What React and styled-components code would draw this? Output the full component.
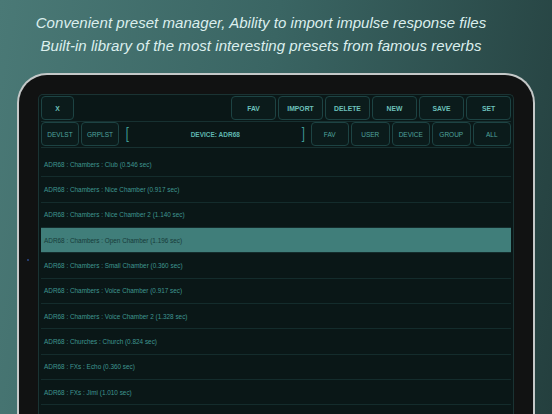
import styled, { createGlobalStyle } from "styled-components";

const GlobalStyle = createGlobalStyle`
    html, body {
        margin: 0;
        padding: 0;
    }
    body {
        width: 552px;
        height: 414px;
        overflow: hidden;
        font-family: "Liberation Sans", Arial, sans-serif;
    }
`;

const Page = styled.div`
    width: 552px;
    height: 414px;
    overflow: hidden;
    background: linear-gradient(100deg, #4a7976 0%, #3a6563 45%, #243f3e 100%);
    display: flex;
    flex-direction: column;
    align-items: center;
`;

const Heading = styled.div`
    margin-top: 11px;
    padding-right: 30px;
    color: #dcefee;
    font-style: italic;
    font-size: 15px;
    line-height: 23px;
    text-align: center;
    letter-spacing: 0.05px;
`;

const Tablet = styled.div`
    margin-top: 16px;
    width: 518px;
    flex: 1;
    box-sizing: border-box;
    border: 2px solid #c4c8c8;
    border-bottom: none;
    border-radius: 30px 30px 0 0;
    background: #111212;
    padding: 19px 19px 0 19px;
    position: relative;
`;

const Camera = styled.span`
    position: absolute;
    left: 8px;
    top: 184px;
    width: 2px;
    height: 2px;
    border-radius: 50%;
    background: #2c4a8a;
`;

const Screen = styled.div`
    height: 100%;
    box-sizing: border-box;
    background: #0a1717;
    border: 1px solid #1a3333;
    border-bottom: none;
    border-radius: 5px 5px 0 0;
    padding: 1px 2px 0;
    display: flex;
    flex-direction: column;
`;

const ToolRow = styled.div`
    display: flex;
    align-items: center;
    gap: 2px;
    height: 24px;
    padding-bottom: 1px;
    border-bottom: 1px solid #173131;
`;

const Button = styled.div`
    width: ${p => p.$w}px;
    flex-shrink: 0;
    height: 24px;
    box-sizing: border-box;
    display: flex;
    align-items: center;
    justify-content: center;
    border: 1px solid #1d4343;
    border-radius: 4px;
    background: #0b1b1b;
    color: ${p => (p.$bold ? "#6cc0ba" : "#4fa39d")};
    font-size: ${p => (p.$bold ? 6.8 : 6.5)}px;
    font-weight: ${p => (p.$bold ? 700 : 400)};
`;

const Spacer = styled.div`
    flex: 1;
`;

const DeviceBar = styled.div`
    flex: 1;
    align-self: stretch;
    display: flex;
    align-items: center;
    justify-content: space-between;
    padding: 0 3px 0 4px;
    color: #3f9c96;
`;

const Bracket = styled.span`
    font-size: 16px;
    font-weight: 300;
    line-height: 1;
    transform: scaleX(0.7);
`;

const DeviceLabel = styled.span`
    font-size: 6.5px;
    font-weight: 700;
    color: #5fb6b0;
`;

const List = styled.div`
    margin-top: 4px;
    display: flex;
    flex-direction: column;
`;

const Item = styled.div`
    height: 25.35px;
    box-sizing: border-box;
    display: flex;
    align-items: center;
    padding-left: 3px;
    border-bottom: 1px solid #142c2c;
    background: ${p => (p.$active ? "#407e7a" : "transparent")};
    color: ${p => (p.$active ? "#173b39" : "#3f9690")};
    font-size: 6.4px;
`;

const topButtons = ["FAV", "IMPORT", "DELETE", "NEW", "SAVE", "SET"];
const filterButtons = ["FAV", "USER", "DEVICE", "GROUP", "ALL"];

const presets = [
    "ADR68 : Chambers : Club (0.546 sec)",
    "ADR68 : Chambers : Nice Chamber (0.917 sec)",
    "ADR68 : Chambers : Nice Chamber 2 (1.140 sec)",
    "ADR68 : Chambers : Open Chamber (1.196 sec)",
    "ADR68 : Chambers : Small Chamber (0.360 sec)",
    "ADR68 : Chambers : Voice Chamber (0.917 sec)",
    "ADR68 : Chambers : Voice Chamber 2 (1.328 sec)",
    "ADR68 : Churches : Church (0.824 sec)",
    "ADR68 : FXs : Echo (0.360 sec)",
    "ADR68 : FXs : Jimi (1.010 sec)",
];

export default function App() {
    return (
        <>
            <GlobalStyle />
            <Page>
                <Heading>
                    Convenient preset manager, Ability to import impulse response files
                    <br />
                    Built-in library of the most interesting presets from famous reverbs
                </Heading>
                <Tablet>
                    <Camera />
                    <Screen>
                        <ToolRow>
                            <Button $w={33} $bold>X</Button>
                            <Spacer />
                            {topButtons.map(label => (
                                <Button key={label} $w={45} $bold>{label}</Button>
                            ))}
                        </ToolRow>
                        <ToolRow>
                            <Button $w={38}>DEVLST</Button>
                            <Button $w={38}>GRPLST</Button>
                            <DeviceBar>
                                <Bracket>[</Bracket>
                                <DeviceLabel>DEVICE: ADR68</DeviceLabel>
                                <Bracket>]</Bracket>
                            </DeviceBar>
                            {filterButtons.map(label => (
                                <Button key={label} $w={38.5}>{label}</Button>
                            ))}
                        </ToolRow>
                        <List>
                            {presets.map((name, index) => (
                                <Item key={name} $active={index === 3}>{name}</Item>
                            ))}
                        </List>
                    </Screen>
                </Tablet>
            </Page>
        </>
    );
}
